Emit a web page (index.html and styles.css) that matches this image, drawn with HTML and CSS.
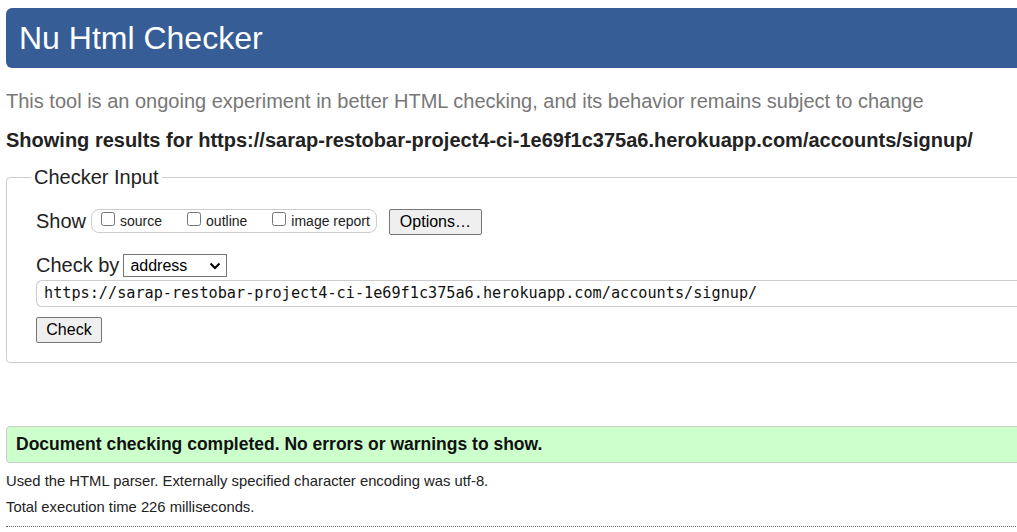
FILE: index.html
```html
<!DOCTYPE html>
<html>
<head>
<meta charset="utf-8">
<title>Nu Html Checker</title>
<link rel="stylesheet" href="styles.css">
</head>
<body>
<div class="page">
  <header class="masthead"><h1 class="title">Nu Html Checker</h1></header>
  <p class="tagline">This tool is an ongoing experiment in better HTML checking, and its behavior remains subject to change</p>
  <p class="showing">Showing results for https://sarap-restobar-project4-ci-1e69f1c375a6.herokuapp.com/accounts/signup/</p>
  <fieldset class="input-box">
    <legend class="legend">Checker Input</legend>
    <div class="form-body">
      <div class="row show-row">
        <span class="label">Show</span>
        <div class="show-group">
          <label class="opt opt-first"><input type="checkbox" class="cb"><span>source</span></label>
          <label class="opt"><input type="checkbox" class="cb"><span>outline</span></label>
          <label class="opt"><input type="checkbox" class="cb"><span>image report</span></label>
        </div>
        <button class="btn btn-options">Options…</button>
      </div>
      <div class="row by-row">
        <span class="label">Check by</span>
        <span class="select-wrap">
          <select class="select"><option>address</option></select>
          <svg class="chev" width="12" height="8" viewBox="0 0 12 8"><path d="M1.5 1.5 L6 6 L10.5 1.5" fill="none" stroke="#000" stroke-width="2"/></svg>
        </span>
      </div>
      <div class="url">https://sarap-restobar-project4-ci-1e69f1c375a6.herokuapp.com/accounts/signup/</div>
      <div class="check-row"><button class="btn btn-check">Check</button></div>
    </div>
  </fieldset>
  <div class="success">Document checking completed. No errors or warnings to show.</div>
  <p class="info info-first">Used the HTML parser. Externally specified character encoding was utf-8.</p>
  <p class="info">Total execution time 226 milliseconds.</p>
  <div class="rule"></div>
</div>
</body>
</html>
```

FILE: styles.css
```css
html, body {
  margin: 0;
  padding: 0;
  overflow: hidden;
  background: #fff;
}
body {
  font-family: "Liberation Sans", Arial, sans-serif;
  color: #222;
}
.page {
  width: 1250px;
  padding: 8px 0 0 6px;
}
.masthead {
  height: 60px;
  background: #365d95;
  border-radius: 6px;
  display: flex;
  align-items: center;
  padding-left: 13px;
}
.title {
  margin: 0;
  font-weight: normal;
  font-size: 32px;
  line-height: 36px;
  color: #fff;
}
.tagline {
  margin: 21px 0 0;
  font-size: 20px;
  line-height: 24px;
  color: #777;
}
.showing {
  margin: 15px 0 0;
  font-size: 20px;
  line-height: 24px;
  font-weight: bold;
  color: #222;
}
.input-box {
  margin: 13px 0 0;
  padding: 0 0 19px 29px;
  border: 1px solid #ccc;
  border-radius: 4px;
}
.legend {
  margin-left: -5px;
  padding: 0 3px;
  font-size: 20px;
  line-height: 24px;
  color: #222;
}
.form-body {
  display: flex;
  flex-direction: column;
  padding-top: 19px;
}
.row {
  display: flex;
  align-items: center;
}
.show-row {
  height: 26px;
}
.label {
  font-size: 20px;
  line-height: 24px;
  color: #222;
}
.show-group {
  margin-left: 5px;
  height: 22px;
  display: flex;
  align-items: center;
  border: 1px solid #ccc;
  border-radius: 8px;
  padding: 0 6px 0 8px;
}
.opt {
  display: flex;
  align-items: center;
  margin-left: 24px;
  font-size: 14px;
  color: #222;
}
.opt-first {
  margin-left: 0;
}
.cb {
  margin: 0 5px 4px 1px;
  width: 14px;
  height: 14px;
}
.btn {
  font-family: "Liberation Sans", Arial, sans-serif;
  font-size: 16px;
  color: #000;
  background: #efefef;
  border: 1px solid #767676;
  border-radius: 2px;
  height: 26px;
  padding: 0 7px;
  margin: 0;
}
.btn-options {
  margin-left: 12px;
  width: 93px;
  position: relative;
  top: 1px;
}
.by-row {
  margin-top: 19px;
  height: 24px;
}
.select-wrap {
  position: relative;
  margin-left: 4px;
  display: inline-block;
  height: 23px;
}
.select {
  appearance: none;
  -webkit-appearance: none;
  width: 104px;
  height: 23px;
  border: 1px solid #767676;
  border-radius: 0;
  background: #fff;
  font-family: "Liberation Sans", Arial, sans-serif;
  font-size: 16px;
  color: #000;
  padding: 0 0 0 6px;
  margin: 0;
}
.chev {
  position: absolute;
  left: 86px;
  top: 8px;
  pointer-events: none;
}
.url {
  margin-top: 3px;
  height: 25px;
  border: 1px solid #ccc;
  border-radius: 6px 0 0 6px;
  border-right: none;
  padding-left: 7px;
  font-family: "DejaVu Sans Mono", "Liberation Mono", monospace;
  font-size: 15.2px;
  line-height: 25px;
  color: #111;
}
.check-row {
  margin-top: 10px;
}
.btn-check {
  width: 66px;
}
.success {
  margin-top: 63px;
  height: 35px;
  line-height: 35px;
  background: #ccffcc;
  border: 1px solid #ccc;
  border-radius: 4px;
  padding-left: 9px;
  font-size: 17.5px;
  font-weight: bold;
  color: #111;
}
.info {
  margin: 8px 0 0;
  font-size: 14.8px;
  line-height: 18px;
  color: #222;
}
.info-first {
  margin-top: 9px;
}
.rule {
  margin-top: 10px;
  border-top: 1px dotted #666;
}
```
